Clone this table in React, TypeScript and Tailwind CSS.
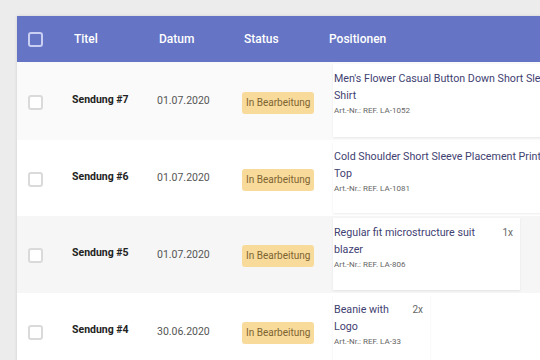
import React from 'react';

interface Shipment {
  title: string;
  date: string;
  status: string;
  rowBg: string;
  item: { name: string; ref: string; qty?: string };
  cardW: string;
  nameW: string;
  rowH: string;
}

const shipments: Shipment[] = [
  {
    title: 'Sendung #7',
    date: '01.07.2020',
    status: 'In Bearbeitung',
    rowBg: 'bg-[#fafafa]',
    item: { name: "Men's Flower Casual Button Down Short Sleeve Shirt", ref: 'Art.-Nr.: REF. LA-1052' },
    cardW: 'w-[270px]',
    nameW: 'w-[240px]',
    rowH: 'h-[78px]',
  },
  {
    title: 'Sendung #6',
    date: '01.07.2020',
    status: 'In Bearbeitung',
    rowBg: 'bg-white',
    item: { name: 'Cold Shoulder Short Sleeve Placement Print Top', ref: 'Art.-Nr.: REF. LA-1081' },
    cardW: 'w-[270px]',
    nameW: 'w-[212px]',
    rowH: 'h-[76px]',
  },
  {
    title: 'Sendung #5',
    date: '01.07.2020',
    status: 'In Bearbeitung',
    rowBg: 'bg-[#f6f6f6]',
    item: { name: 'Regular fit microstructure suit blazer', ref: 'Art.-Nr.: REF. LA-806', qty: '1x' },
    cardW: 'w-[187px]',
    nameW: 'w-[160px]',
    rowH: 'h-[77px]',
  },
  {
    title: 'Sendung #4',
    date: '30.06.2020',
    status: 'In Bearbeitung',
    rowBg: 'bg-white',
    item: { name: 'Beanie with Logo', ref: 'Art.-Nr.: REF. LA-33', qty: '2x' },
    cardW: 'w-[97px]',
    nameW: 'w-[70px]',
    rowH: 'h-[77px]',
  },
];

const Checkbox = ({ header }: { header?: boolean }) => (
  <div
    className={
      header
        ? 'w-[15px] h-[15px] rounded-[3px] border-2 border-[#c9cff2]'
        : 'w-[15px] h-[15px] rounded-[3px] border-2 border-[#dadada] bg-white'
    }
  />
);

export default function App() {
  return (
    <div className="w-[540px] h-[360px] overflow-hidden bg-[#ececec] pt-4 pl-[17px] font-['Roboto',sans-serif]">
      <div className="w-[600px] shadow-[0_0_3px_rgba(0,0,0,0.12)]">
        {/* header */}
        <div className="flex h-[46px] items-center bg-[#6574c4] text-[12px] font-medium text-white">
          <div className="w-[55px] pl-[11px]">
            <Checkbox header />
          </div>
          <div className="w-[85px] pl-[2px]">Titel</div>
          <div className="w-[85px] pl-[2px]">Datum</div>
          <div className="w-[87px] pl-[2px]">Status</div>
          <div>Positionen</div>
        </div>

        {shipments.map((s) => (
          <div key={s.title} className={`flex items-center ${s.rowH} ${s.rowBg}`}>
            <div className="w-[55px] pl-[11px] pt-[2px]">
              <Checkbox />
            </div>
            <div className="w-[85px] -mt-[3px] text-[10.5px] font-bold text-[#222]">{s.title}</div>
            <div className="w-[85px] text-[10.5px] text-[#555]">{s.date}</div>
            <div className="w-[91px]">
              <span className="inline-block rounded-[3px] bg-[#f8da9b] px-[4px] py-[4px] text-[10px] leading-[14px] text-[#7d6431]">
                {s.status}
              </span>
            </div>
            <div className="self-stretch pt-[2px] pb-[3px]">
              <div className={`h-full ${s.cardW} bg-white pl-[1px] pt-[6px] shadow-[0_1px_2px_rgba(0,0,0,0.08)]`}>
                <div className="flex items-start">
                  <div className={`${s.nameW} text-[10.7px] leading-[17px] text-[#3f4272]`}>{s.item.name}</div>
                  {s.item.qty && <div className="ml-auto pr-[7px] text-[10px] leading-[17px] text-[#666]">{s.item.qty}</div>}
                </div>
                <div className="mt-[1px] text-[8px] text-[#666]">{s.item.ref}</div>
              </div>
            </div>
          </div>
        ))}
      </div>
    </div>
  );
}
